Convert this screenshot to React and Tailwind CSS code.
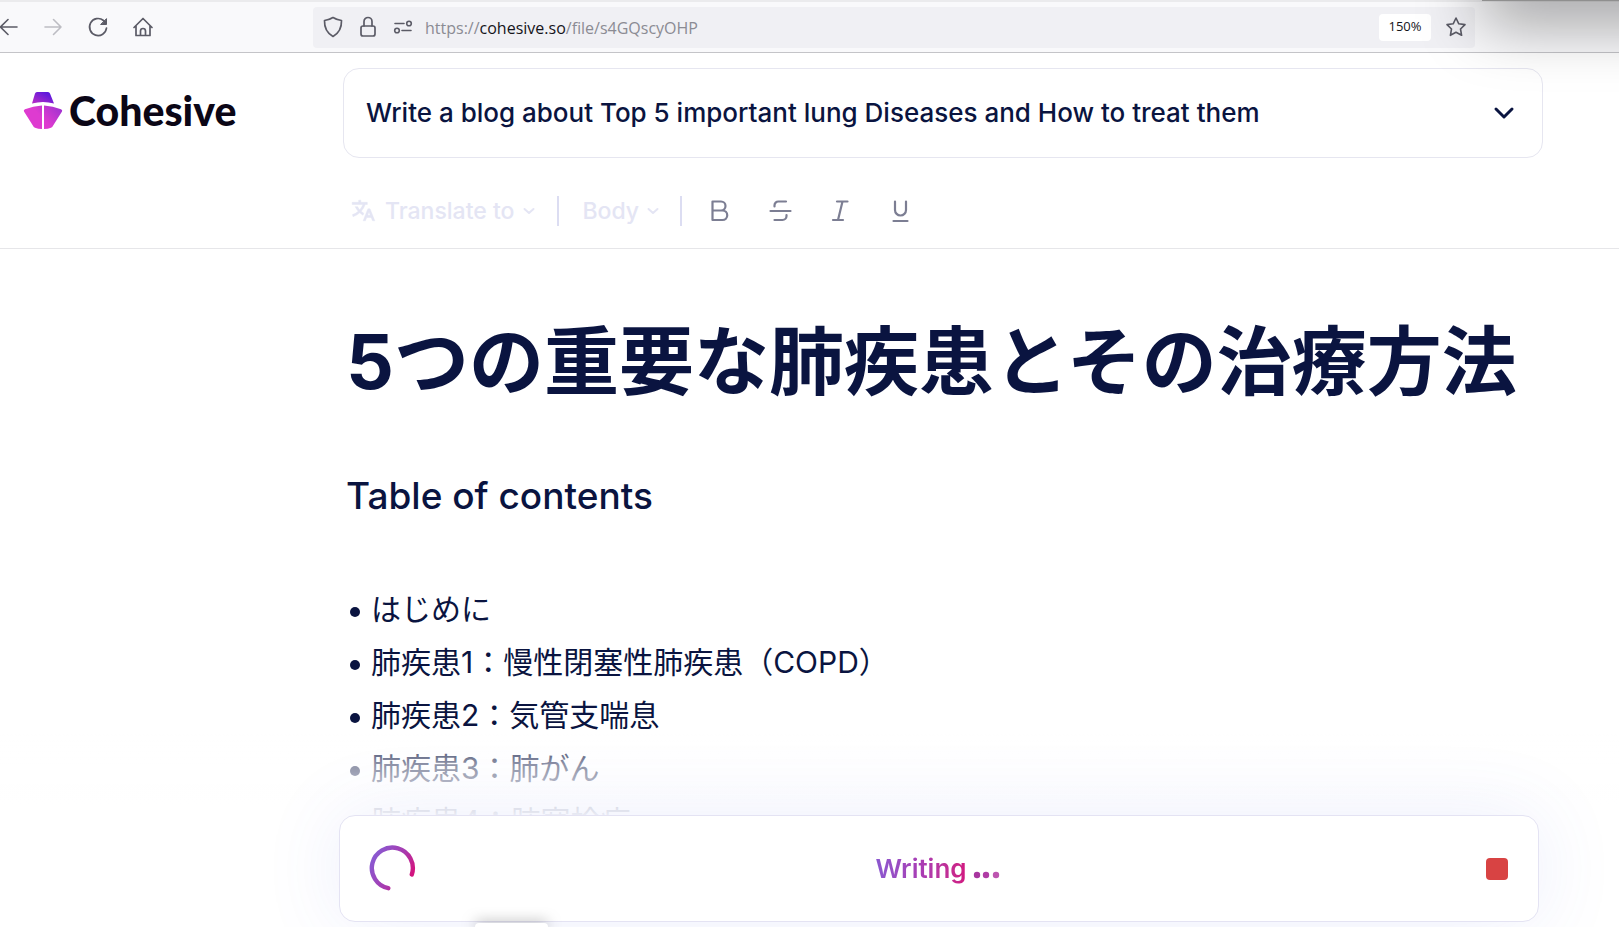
import React from "react";

const contents = [
  "はじめに",
  "肺疾患1：慢性閉塞性肺疾患（COPD）",
  "肺疾患2：気管支喘息",
  "肺疾患3：肺がん",
  "肺疾患4：肺塞栓症",
];

function Icon({ className, children, width = 2, box = 24 }) {
  return (
    <svg
      viewBox={`0 0 ${box} ${box}`}
      className={className}
      fill="none"
      stroke="currentColor"
      strokeWidth={width}
      strokeLinecap="round"
      strokeLinejoin="round"
      aria-hidden="true"
    >
      {children}
    </svg>
  );
}

function BrowserBar() {
  return (
    <div className="flex h-[53px] items-center border-b border-[#c4c4c8] bg-[#f9f9fb] pt-[2px] text-[#5b5b66] shadow-[inset_0_2px_0_#ebebed]">
      <div className="flex w-[313px] shrink-0 items-center gap-[21px]">
        <button aria-label="Back" className="-ml-1 text-[#5b5b66]">
          <Icon className="size-6" width={1.6}><path d="M21 12H5M12 4.500 4.500 12l7.500 7.500" /></Icon>
        </button>
        <button aria-label="Forward" disabled className="text-[#bdbdc3]">
          <Icon className="size-6" width={1.6}><path d="M4 12h16M12.500 4.500 20 12l-7.500 7.500" /></Icon>
        </button>
        <button aria-label="Reload">
          <Icon className="size-6" width={1.7}>
            <path d="M20.500 13a8.500 8.500 0 1 1-3-7.500l1.500 1.500" />
            <path d="M20.500 4v5.500H15z" fill="currentColor" strokeWidth="1" />
          </Icon>
        </button>
        <button aria-label="Home">
          <Icon className="size-6" width={1.7}>
            <path d="M3 12.500 12 3.500l9 9M5 11v9.500h14V11M9.500 20.500V16a2.500 2.500 0 0 1 5 0v4.500" />
          </Icon>
        </button>
      </div>
      <div className="mr-[144px] flex h-[41px] grow items-center rounded-[4px] bg-[#f0f0f4] pl-2 pr-[7px]">
        <Icon className="size-6 shrink-0" width={1.7}>
          <path d="M12 2.500c3 2 5.500 2.600 8.500 3 .2 6-1.500 12-8.500 16C5 17.500 3.300 11.500 3.500 5.500c3-.4 5.500-1 8.500-3z" />
        </Icon>
        <Icon className="ml-[11px] size-6 shrink-0" width={1.7}>
          <rect x="5" y="11" width="14" height="10" rx="2" />
          <path d="M8 11V6.500a4 4 0 0 1 8 0V11" />
        </Icon>
        <Icon className="ml-[11px] size-6 shrink-0" width={1.6}>
          <path d="M4 8.500h9M11 15.500h9" />
          <circle cx="18" cy="8.500" r="2.300" />
          <circle cx="6" cy="15.500" r="2.300" />
        </Icon>
        <div
          role="textbox"
          aria-label="Address"
          tabIndex={0}
          className="ml-[10px] grow pt-[2px] font-['Open_Sans','Noto_Sans',sans-serif] text-[16px] leading-6 text-[#8b8b93]"
        >
          https://<span className="text-[#15141a]">cohesive.so</span>/file/s4GQscyOHP
        </div>
        <button className="h-[27px] w-[52px] rounded-[4px] bg-white font-['Open_Sans','Noto_Sans',sans-serif] text-[13px] text-[#15141a]">150%</button>
        <button aria-label="Bookmark" className="ml-[13px]">
          <Icon className="size-6" width={1.6}>
            <path d="m12 3 2.800 5.800 6.200.8-4.500 4.400 1.100 6.300L12 17.300l-5.600 3 1.100-6.300L3 9.600l6.200-.8z" />
          </Icon>
        </button>
      </div>
    </div>
  );
}

function Logo() {
  return (
    <a href="#" className="flex items-center gap-[6px] pl-[23px]">
      <svg viewBox="0 0 40 38" className="h-[38px] w-[40px]" aria-hidden="true">
        <defs>
          <linearGradient id="cap" x1="0" y1="1" x2="1" y2="0">
            <stop offset="0.100" stopColor="#b02bc8" />
            <stop offset="0.800" stopColor="#5d18dc" />
          </linearGradient>
          <linearGradient id="hull" gradientUnits="userSpaceOnUse" x1="14" y1="30" x2="38" y2="8">
            <stop offset="0.200" stopColor="#de3bd0" />
            <stop offset="1" stopColor="#9030d0" />
          </linearGradient>
        </defs>
        <path d="M14 0h11q1.500 0 2 1.500L31 11.500q-11-3-22 0L12 1.500Q12.500 0 14 0z" fill="url(#cap)" />
        <path d="M19 13.500V37q-4 0-7-1.200-1.500-.7-2-2L1 19.500q-.8-1.500 1-2.200 8-3.300 17-3.800z" fill="url(#hull)" />
        <path d="M21 13.500V37q4 0 7-1.200 1.500-.7 2-2l9-14.300q.8-1.500-1-2.200-8-3.300-17-3.800z" fill="url(#hull)" />
      </svg>
      <span className="font-['Lato',sans-serif] text-[41px] font-black leading-[46px] text-[#0b0616]">Cohesive</span>
    </a>
  );
}

function Chevron() {
  return (
    <svg viewBox="0 0 12 12" className="size-3" fill="none" stroke="currentColor" strokeWidth="2" strokeLinecap="round" strokeLinejoin="round" aria-hidden="true">
      <path d="m1.500 4 4.500 4 4.500-4" />
    </svg>
  );
}

function FormatBar() {
  return (
    <div className="mt-[15px] flex h-[75px] items-center text-[23px] font-medium leading-8 text-[#e4e5f4]">
      <button className="flex items-center gap-[9px] pl-[7px]">
        <svg viewBox="0 0 24 24" className="size-[26px]" fill="currentColor" stroke="currentColor" strokeWidth="0.400" aria-hidden="true">
          <path d="m18.500 10 4.400 11h-2.155l-1.201-3h-4.090l-1.199 3h-2.154L16.500 10h2zM10 2v2h6v2h-1.968a18.222 18.222 0 0 1-3.620 6.301 14.864 14.864 0 0 0 2.336 1.707l-.751 1.878A17.015 17.015 0 0 1 9 13.725a16.676 16.676 0 0 1-6.201 3.548l-.536-1.929a14.700 14.700 0 0 0 5.327-3.042A18.078 18.078 0 0 1 4.767 8h2.240A16.032 16.032 0 0 0 9 10.877a16.165 16.165 0 0 0 2.910-4.876L2 6V4h6V2h2zm7.500 10.885L16.253 16h2.492L17.500 12.885z" />
        </svg>
        <span>Translate to</span>
        <Chevron />
      </button>
      <span className="ml-[22px] h-[30px] w-[2px] bg-[#dcddf2]" />
      <button className="ml-[23px] flex items-center gap-2">
        <span>Body</span>
        <Chevron />
      </button>
      <span className="ml-[21px] mr-[9px] h-[30px] w-[2px] bg-[#dcddf2]" />
      <button aria-label="Bold" className="flex w-[60px] justify-center text-[#7c7e93]">
        <Icon className="size-6" width={2.2}><path d="M3.500 2.500h8.500a4.500 4.500 0 0 1 0 9h-8.500v-9zM3.500 11.500h10a4.700 4.700 0 0 1 0 9.500h-10v-9.500z" /></Icon>
      </button>
      <button aria-label="Strikethrough" className="flex w-[60px] justify-center text-[#7c7e93]">
        <Icon className="size-6" width={2.2}>
          <path d="M1.500 12h20M17 2.500H9.500a3.800 3.800 0 0 0-4 4V7.500M5.500 21h8a4 4 0 0 0 4-4V16" />
        </Icon>
      </button>
      <button aria-label="Italic" className="flex w-[60px] justify-center text-[#7c7e93]">
        <Icon className="size-6" width={2.2}><path d="M8 2.500h10.500M4 21h10M13.500 2.500 9 21" /></Icon>
      </button>
      <button aria-label="Underline" className="flex w-[60px] justify-center text-[#7c7e93]">
        <Icon className="size-6" width={2.2}><path d="M6 2.500v8.500a5.500 5.500 0 0 0 11 0V2.500M4.500 22h14" /></Icon>
      </button>
    </div>
  );
}

function WritingBar() {
  return (
    <div className="fixed inset-x-0 bottom-0">
      <div className="h-[84px] bg-linear-to-b from-white/0 via-white/55 via-40% to-white/95" />
      <div className="bg-white pb-[5px] pl-[339px] pr-[80px]">
        <div className="flex h-[107px] items-center justify-between rounded-[16px] border border-[#e4e3f3] bg-white pl-[28px] pr-[30px] shadow-[0_0_80px_rgba(80,100,230,0.1)]">
          <svg viewBox="0 0 48 48" className="size-[48px]" fill="none" aria-hidden="true">
            <defs>
              <linearGradient id="ring" gradientUnits="userSpaceOnUse" x1="6" y1="12" x2="42" y2="32">
                <stop stopColor="#8b58d0" />
                <stop offset="0.600" stopColor="#a93aae" />
                <stop offset="1" stopColor="#d2157f" />
              </linearGradient>
            </defs>
            <path d="M20.300 43.200A20.500 20.500 0 1 1 43.800 29.500" stroke="url(#ring)" strokeWidth="4.400" strokeLinecap="round" />
          </svg>
          <div role="status" className="flex items-center text-[26px] font-semibold leading-8">
            <span className="bg-linear-to-r from-[#8a58d0] via-[#a93cb4] to-[#d2157f] bg-clip-text text-transparent">Writing</span>
            <svg viewBox="0 0 28 8" className="ml-[6px] mt-[13px] h-2 w-7" aria-hidden="true">
              <circle cx="4" cy="4" r="3.200" fill="#a8359f" />
              <circle cx="13" cy="4" r="3.200" fill="#b03ca5" />
              <circle cx="23" cy="4" r="3.200" fill="#bd55b0" />
            </svg>
          </div>
          <button aria-label="Stop writing" className="flex size-[48px] items-center justify-end">
            <span className="size-[22px] rounded-[4px] bg-[#d84343]" />
          </button>
        </div>
      </div>
      <div className="absolute bottom-0 left-[475px] h-[4px] w-[73px] rounded-t-[6px] bg-white shadow-[0_0_14px_rgba(0,0,0,0.55)]" />
    </div>
  );
}

export default function App() {
  return (
    <div className="relative h-screen overflow-hidden bg-white font-['Inter','Noto_Sans_CJK_JP',sans-serif] text-[#0a1440]">
      <BrowserBar />
      <header className="grid grid-cols-[343px_1fr] border-b border-[#e6e6e9] pr-[76px] pt-[15px]">
        <div className="flex h-[86px] items-center"><Logo /></div>
        <div>
          <button className="flex h-[90px] w-full items-center justify-between rounded-[16px] border border-[#e6e6f0] pl-[22px] pr-[26px] text-left text-[26px] font-medium leading-8">
            <span>Write a blog about Top 5 important lung Diseases and How to treat them</span>
            <Icon className="size-6" width={3}><path d="m4 8 8 8 8-8" /></Icon>
          </button>
          <FormatBar />
        </div>
      </header>
      <main className="pl-[346px] pr-[76px]">
        <h1 className="mt-[67px] whitespace-nowrap text-[75px] font-bold leading-[92px]">5つの重要な肺疾患とその治療方法</h1>
        <h2 className="mt-[64px] text-[37px] font-medium leading-[48px]">Table of contents</h2>
        <ul className="mt-[63px] pl-[2px] text-[30px] font-normal leading-[53px]">
          {contents.map((item) => (
            <li key={item} className="flex items-center gap-[11px]">
              <span className="ml-[2px] mt-[4px] size-[10px] shrink-0 rounded-full bg-[#0a1440]" />
              {item}
            </li>
          ))}
        </ul>
      </main>
      <WritingBar />
      <div className="pointer-events-none absolute -top-[60px] -right-[200px] h-[61px] w-[337px] bg-[#8f8f8f] shadow-[0_20px_64px_rgba(0,0,0,0.4)]" />
    </div>
  );
}
